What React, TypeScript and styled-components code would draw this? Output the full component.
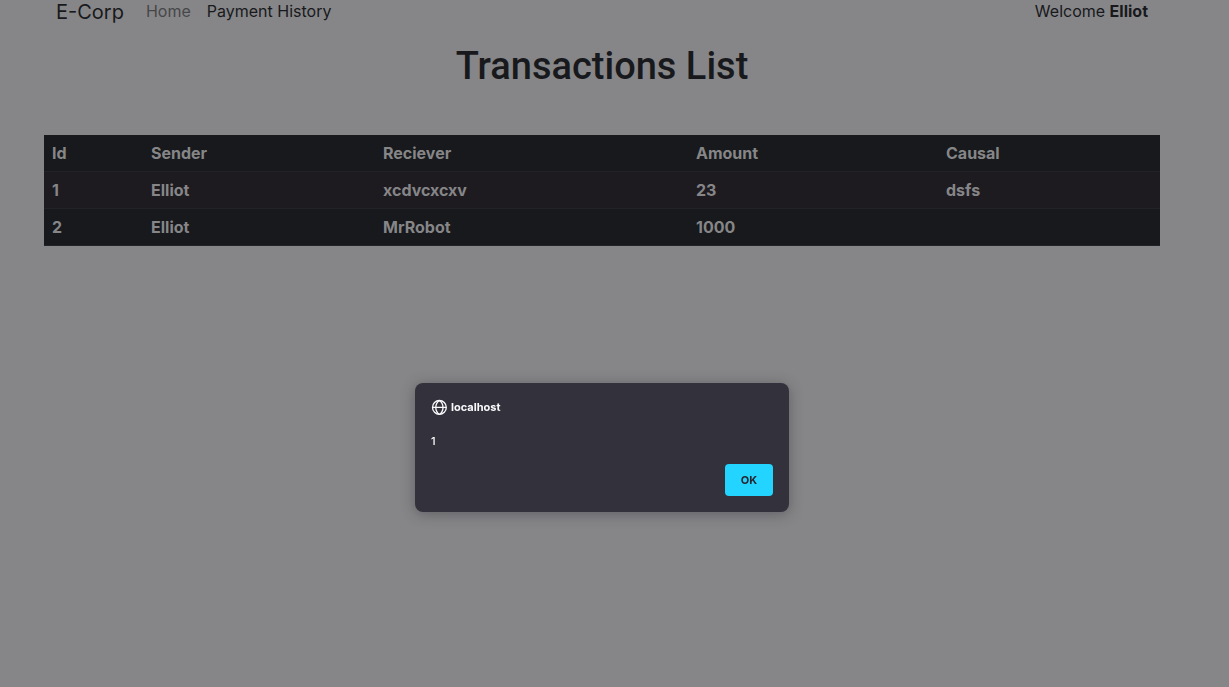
import React from "react";
import styled, { createGlobalStyle } from "styled-components";

const GlobalStyle = createGlobalStyle`
  *, *::before, *::after { box-sizing: border-box; }
  body {
    margin: 0;
    padding-right: 25px;
    background: #868688;
    color: #18191c;
    font-family: Inter, "Liberation Sans", sans-serif;
    font-size: 16px;
    line-height: 24px;
  }
`;

const Container = styled.div`
  width: 100%;
  max-width: 1140px;
  margin: 0 auto;
  padding: 0 12px;
`;

const Navbar = styled.nav`
  display: flex;
  align-items: flex-start;
  padding: 0 12px;
  line-height: 22px;
`;

const Brand = styled.a`
  margin-right: 14px;
  color: inherit;
  font-size: 20px;
  line-height: 24px;
  text-decoration: none;
`;

const NavList = styled.ul`
  display: flex;
  flex: 1;
  margin: 0;
  padding: 0;
  list-style: none;
`;

const NavLink = styled.a<{ $active?: boolean }>`
  display: block;
  padding: 0 8px;
  color: ${(p) => (p.$active ? "#18191c" : "#464749")};
  text-decoration: none;
`;

const Title = styled.h1`
  margin: 18px 0 45px;
  font-family: Roboto, Inter, sans-serif;
  font-size: 38px;
  font-weight: 500;
  line-height: 48px;
  text-align: center;
`;

const Table = styled.table`
  width: 100%;
  table-layout: fixed;
  border-collapse: separate;
  border-spacing: 0;
  background: #17191c;
  color: #868688;
  text-align: left;
`;

const Column = styled.col<{ $width: number }>`
  width: ${(p) => p.$width}px;
`;

const Row = styled.tr<{ $striped?: boolean }>`
  height: 37px;
  background: ${(p) => (p.$striped ? "#1d1b20" : "transparent")};
`;

const HeadCell = styled.th`
  padding: 6px 8px;
  border-bottom: 1px solid #222327;
  font-weight: 700;
`;

const Cell = styled.td`
  padding: 6px 8px;
  border-bottom: 1px solid #222327;
  font-weight: 700;
`;

const Overlay = styled.div`
  position: fixed;
  inset: 0 25px 0 0;
  display: flex;
  align-items: center;
  justify-content: center;
  padding-top: 208px;
`;

const Dialog = styled.div`
  display: flex;
  flex-direction: column;
  width: 374px;
  padding: 16px;
  border-radius: 8px;
  background: #33323c;
  box-shadow: 0 2px 14px rgba(40, 40, 50, 0.4);
  color: #fbfbfe;
  font-size: 11px;
  line-height: 16px;
`;

const Origin = styled.h2`
  display: flex;
  align-items: center;
  gap: 4px;
  margin: 0 0 18px;
  font-size: 11px;
  font-weight: 700;
`;

const Message = styled.p`
  margin: 0 0 15px;
  font-weight: 500;
`;

const OkButton = styled.button`
  align-self: flex-end;
  width: 48px;
  height: 32px;
  padding: 0;
  border: 0;
  border-radius: 4px;
  background: #22d4ff;
  color: #252630;
  font: inherit;
  font-weight: 700;
`;

const GlobeIcon = () => (
  <svg width="16" height="16" viewBox="0 0 16 16" fill="none" stroke="#fbfbfe" strokeWidth="1.3" aria-hidden="true">
    <circle cx="8.4" cy="8.4" r="6.9" />
    <path d="M1.4 8.4h14M8.4 1.4C3.6 5 3.6 11.8 8.4 15.4M8.4 1.4c4.8 3.6 4.8 10.4 0 14" />
  </svg>
);

const columns = [
  { name: "Id", width: 99 },
  { name: "Sender", width: 232 },
  { name: "Reciever", width: 313 },
  { name: "Amount", width: 250 },
  { name: "Causal", width: 222 },
];

const transactions = [
  ["1", "Elliot", "xcdvcxcxv", "23", "dsfs"],
  ["2", "Elliot", "MrRobot", "1000", ""],
];

export default function App() {
  return (
    <>
      <GlobalStyle />
      <Container>
        <Navbar>
          <Brand href="#">E-Corp</Brand>
          <NavList>
            <li><NavLink href="#">Home</NavLink></li>
            <li><NavLink href="#" $active>Payment History</NavLink></li>
          </NavList>
          <span>Welcome <b>Elliot</b></span>
        </Navbar>
        <main>
          <Title>Transactions List</Title>
          <Table>
            <colgroup>
              {columns.map((c) => <Column key={c.name} $width={c.width} />)}
            </colgroup>
            <thead>
              <Row>
                {columns.map((c) => <HeadCell key={c.name} scope="col">{c.name}</HeadCell>)}
              </Row>
            </thead>
            <tbody>
              {transactions.map((cells, i) => (
                <Row key={cells[0]} $striped={i % 2 === 0}>
                  {cells.map((text, j) => <Cell key={columns[j].name}>{text}</Cell>)}
                </Row>
              ))}
            </tbody>
          </Table>
        </main>
      </Container>
      <Overlay>
        <Dialog role="alertdialog" aria-modal="true" aria-labelledby="origin" aria-describedby="message">
          <Origin id="origin"><GlobeIcon />localhost</Origin>
          <Message id="message">1</Message>
          <OkButton type="button">OK</OkButton>
        </Dialog>
      </Overlay>
    </>
  );
}
